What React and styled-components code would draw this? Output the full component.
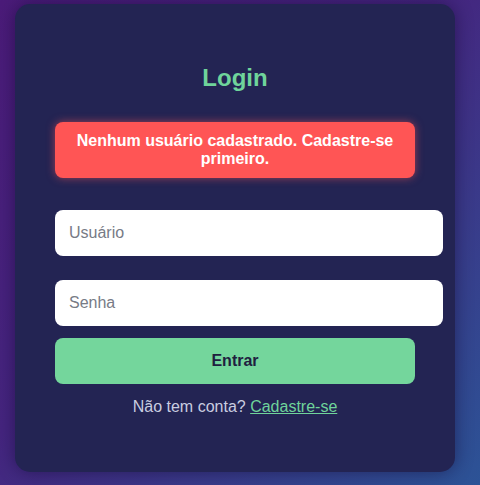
import React from "react";
import styled, { createGlobalStyle } from "styled-components";

const Global = createGlobalStyle`
  html, body { margin: 0; padding: 0; }
  body {
    min-height: 485px;
    background: linear-gradient(135deg, #4b1b79 0%, #45257f 45%, #2c5396 100%);
    font-family: "Liberation Sans", Arial, sans-serif;
  }
`;

const Page = styled.div`
  display: flex;
  align-items: flex-start;
  padding: 4px 25px 13px 15px;
`;

const Card = styled.div`
  box-sizing: border-box;
  width: 440px;
  height: 468px;
  padding: 40px;
  background: #232453;
  border-radius: 15px;
  box-shadow: 0 0 18px rgba(10, 5, 40, 0.45);
  display: flex;
  flex-direction: column;
`;

const Title = styled.h2`
  margin: 20px 0 0;
  font-size: 24px;
  line-height: 28px;
  font-weight: 700;
  color: #6fd49b;
  text-align: center;
`;

const ErrorBox = styled.div`
  margin-top: 30px;
  padding: 10px;
  background: #ff5555;
  color: #ffffff;
  font-weight: 700;
  font-size: 16px;
  line-height: 18px;
  text-align: center;
  border-radius: 8px;
  box-shadow: 0 0 8px rgba(255, 85, 85, 0.55);
`;

const Input = styled.input`
  display: block;
  width: 360px;
  margin-top: ${(p) => p.$gap}px;
  padding: 14px;
  border: none;
  outline: none;
  border-radius: 8px;
  background: #ffffff;
  font-family: "Liberation Sans", Arial, sans-serif;
  font-size: 16px;
  line-height: 18px;
  color: #222;
  &::placeholder { color: #777b86; }
`;

const Button = styled.button`
  width: 360px;
  height: 46px;
  margin-top: 12px;
  border: none;
  border-radius: 8px;
  background: #74d69c;
  color: #1f203f;
  font-family: "Liberation Sans", Arial, sans-serif;
  font-size: 16px;
  font-weight: 700;
  cursor: pointer;
`;

const Footer = styled.p`
  margin: 14px 0 0;
  font-size: 16px;
  line-height: 18px;
  color: #c9cde0;
  text-align: center;
`;

const Link = styled.a`
  color: #6fd49b;
  text-decoration: underline;
`;

export default function App() {
  return (
    <>
      <Global />
      <Page>
        <Card>
          <Title>Login</Title>
          <ErrorBox>Nenhum usuário cadastrado. Cadastre-se primeiro.</ErrorBox>
          <Input $gap={32} placeholder="Usuário" />
          <Input $gap={24} type="password" placeholder="Senha" />
          <Button>Entrar</Button>
          <Footer>
            Não tem conta? <Link href="#">Cadastre-se</Link>
          </Footer>
        </Card>
      </Page>
    </>
  );
}
